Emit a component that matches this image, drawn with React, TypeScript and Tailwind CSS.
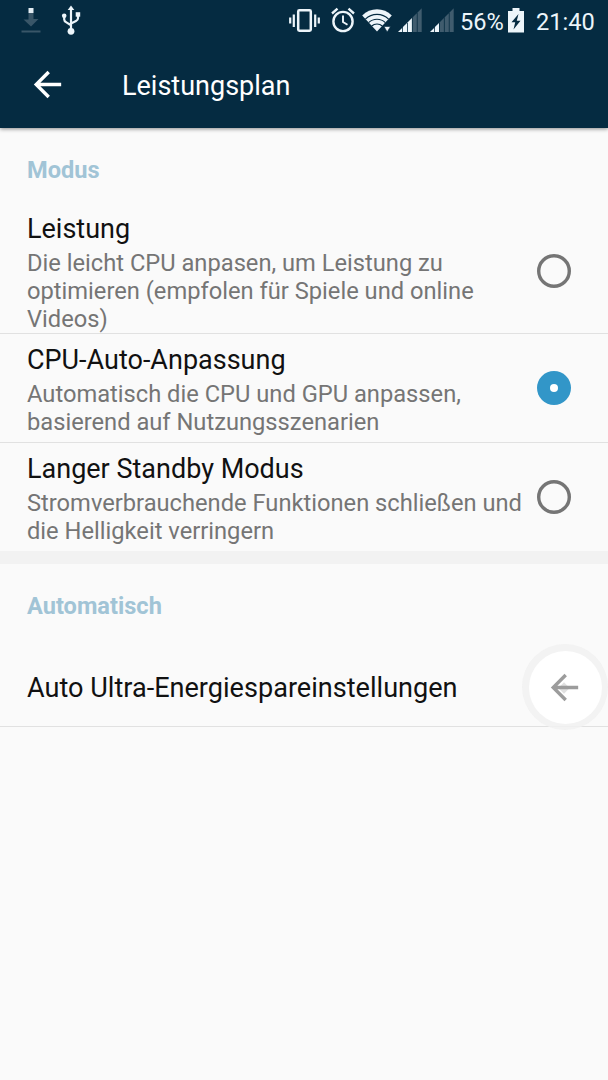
import type { ReactNode } from "react";

type Mode = {
  title: string;
  description: string;
  rowClass: string;
  radioClass: string;
  checked?: boolean;
};

const modes: Mode[] = [
  {
    title: "Leistung",
    description:
      "Die leicht CPU anpasen, um Leistung zu optimieren (empfolen für Spiele und online Videos)",
    rowClass: "h-[125px] pt-1 border-b",
    radioClass: "mt-[41px]",
  },
  {
    title: "CPU-Auto-Anpassung",
    description:
      "Automatisch die CPU und GPU anpassen, basierend auf Nutzungsszenarien",
    rowClass: "h-[109px] pt-2.5 border-b",
    radioClass: "mt-[27px]",
    checked: true,
  },
  {
    title: "Langer Standby Modus",
    description:
      "Stromverbrauchende Funktionen schließen und die Helligkeit verringern",
    rowClass: "h-[108px] pt-2.5",
    radioClass: "mt-[27px]",
  },
];

function BackArrow() {
  return (
    <svg viewBox="0 0 24 24" className="size-[41px]" fill="currentColor">
      <path d="M20 11H7.83l5.59-5.59L12 4l-8 8 8 8 1.41-1.41L7.83 13H20v-2z" />
    </svg>
  );
}

function DownloadIcon() {
  return (
    <svg width="20" height="28" viewBox="0 0 20 28">
      <path
        d="M7.5 7h5v6h5L10 20.500 2.500 13.500h5zM.5 24.500h19v2H.5z"
        fill="#395668"
      />
      <path d="M7.500 2h5v5h-5z" fill="#e3edf3" />
    </svg>
  );
}

function UsbIcon() {
  return (
    <svg width="20" height="30" viewBox="0 0 20 30" fill="#edf5fa">
      <path d="M10 .5l3.300 4.500H6.700z" />
      <circle cx="10" cy="26.300" r="3.400" />
      <circle cx="3.200" cy="10.700" r="2.300" />
      <path d="M14.700 7.200h4.500v4.500h-4.500z" />
      <path
        d="M10 4v21M3.200 11v3.500c0 1.400 1 2.200 2.200 2.900l4.600 2.800M17 11v2.300c0 1.400-.8 2.100-2 2.700l-5 2.600"
        fill="none"
        stroke="#edf5fa"
        strokeWidth="2.200"
      />
    </svg>
  );
}

function VibrateIcon() {
  return (
    <svg width="31" height="26" viewBox="0 0 31 26" fill="none" stroke="#edf5fa">
      <rect x="9.200" y="2.200" width="12.600" height="20.600" rx="1.200" strokeWidth="2.500" />
      <path d="M1.200 9.500v6M4.800 6.500v12.500M26.200 6.500v12.500M29.800 9.500v6" strokeWidth="2.200" />
    </svg>
  );
}

function AlarmIcon() {
  return (
    <svg width="24" height="26" viewBox="0 0 24 26" fill="none" stroke="#edf5fa">
      <circle cx="12" cy="14.500" r="9.600" strokeWidth="2.400" />
      <path d="M1 6.500L6.500 1.700M23 6.500l-5.500-4.800" strokeWidth="2.400" />
      <path d="M12 8.500v6.500l4.500 2.700" strokeWidth="1.900" />
    </svg>
  );
}

function WifiIcon() {
  return (
    <svg width="30" height="26" viewBox="0 0 30 26">
      <path d="M.2 7.500C8-.8 22-.8 29.800 7.500L15 23.500z" fill="#edf5fa" />
      <path
        d="M3.400 11.100c6.500-6.400 16.700-6.400 23.200 0M6.600 14.600c4.700-4.500 12.100-4.500 16.800 0M9.700 18c3-2.700 7.600-2.700 10.600 0"
        fill="none"
        stroke="#052b41"
        strokeWidth="1.200"
      />
      <path d="M22 18.500h6.500L25.200 24z" fill="#edf5fa" stroke="#052b41" strokeWidth=".6" />
    </svg>
  );
}

function SignalIcon({ level }: { level: number }) {
  return (
    <svg width="24" height="25" viewBox="0 0 24 25">
      {[0, 1, 2, 3, 4].map((bar) => {
        const left = bar * 4.9;
        return (
          <path
            key={bar}
            d={`M${left} 24V${24 - left}L${left + 4.1} ${19.9 - left}V24z`}
            fill={bar < level ? "#edf5fa" : "#405c6e"}
          />
        );
      })}
    </svg>
  );
}

function BatteryIcon() {
  return (
    <svg width="16" height="25" viewBox="0 0 16 25">
      <path d="M4.500 0h7v3H16v21.500H0V3h4.500z" fill="#edf5fa" />
      <path d="M10.500 6L3.500 14.300h3.700L5.500 21.500l7-8.700H8.800z" fill="#052b41" />
    </svg>
  );
}

function StatusBar() {
  return (
    <div className="flex h-[42px] items-start text-[#edf5fa]">
      <div className="ml-[21px] mt-[6px]">
        <DownloadIcon />
      </div>
      <div className="ml-5 mt-[5px]">
        <UsbIcon />
      </div>
      <div className="ml-[208px] mt-2">
        <VibrateIcon />
      </div>
      <div className="ml-[11px] mt-[7px]">
        <AlarmIcon />
      </div>
      <div className="ml-[7px] mt-2">
        <WifiIcon />
      </div>
      <div className="ml-[6px] mt-2">
        <SignalIcon level={3} />
      </div>
      <div className="ml-2 mt-2">
        <SignalIcon level={2} />
      </div>
      <span className="ml-[6px] mt-2 w-[43px] whitespace-nowrap text-[23.6px] leading-[28px]">
        56%
      </span>
      <div className="ml-[5px] mt-2">
        <BatteryIcon />
      </div>
      <span className="ml-3 mt-2 whitespace-nowrap text-[23.6px] leading-[28px]">
        21:40
      </span>
    </div>
  );
}

function SectionTitle({ children }: { children: ReactNode }) {
  return (
    <h2 className="pl-[27px] text-[23.6px] font-bold leading-7 text-[#a1c4d6]">
      {children}
    </h2>
  );
}

function Radio({ checked }: { checked?: boolean }) {
  return checked ? (
    <span className="flex size-[34px] items-center justify-center rounded-full bg-[#3296c8]">
      <span className="size-2 rounded-full bg-white" />
    </span>
  ) : (
    <svg width="34" height="34" viewBox="0 0 34 34" fill="none">
      <circle cx="17" cy="17" r="15.300" stroke="#757575" strokeWidth="3.400" />
    </svg>
  );
}

function ModeRow({ title, description, rowClass, radioClass, checked }: Mode) {
  return (
    <div className={`flex border-[#e1e1e1] pl-[27px] ${rowClass}`}>
      <div className="w-[510px]">
        <div className="text-[27px] leading-8 text-[#111]">{title}</div>
        <p className="mt-[5px] w-[502px] text-[23.7px] leading-[27.8px] text-[#757575]">
          {description}
        </p>
      </div>
      <div className={radioClass}>
        <Radio checked={checked} />
      </div>
    </div>
  );
}

export default function App() {
  return (
    <main className="relative h-[1080px] w-[608px] overflow-hidden bg-[#fafafa] font-['Roboto',sans-serif]">
      <header className="h-32 bg-[#052b41] shadow-[0_1px_4px_rgba(0,0,0,0.45)]">
        <StatusBar />
        <div className="flex h-[85px] items-center pl-[27px] text-white">
          <BackArrow />
          <h1 className="ml-[54px] pt-[3px] text-[27px]">Leistungsplan</h1>
        </div>
      </header>

      <section className="h-[423px] pt-7">
        <SectionTitle>Modus</SectionTitle>
        <div className="mt-[25px]">
          {modes.map((mode) => (
            <ModeRow key={mode.title} {...mode} />
          ))}
        </div>
      </section>

      <div className="h-[13px] bg-[#f2f2f2]" />

      <section className="pt-7">
        <SectionTitle>Automatisch</SectionTitle>
        <div className="mt-7 flex h-[79px] items-center border-b border-[#e1e1e1] pl-[27px] pt-[2px] text-[27.1px] text-[#111]">
          Auto Ultra-Energiespareinstellungen
        </div>
      </section>

      {/* floating back button */}
      <button className="absolute left-[522px] top-[644px] flex size-[86px] items-center justify-center rounded-full bg-[#f1f1f1]/85">
        <span className="relative flex size-[73px] items-center justify-center rounded-full bg-white pr-[2px] text-[#9c9c9c]">
          <BackArrow />
          <span className="absolute left-[31px] top-[33px] size-2 rotate-45 bg-[#9c9c9c]/30" />
        </span>
      </button>
    </main>
  );
}
